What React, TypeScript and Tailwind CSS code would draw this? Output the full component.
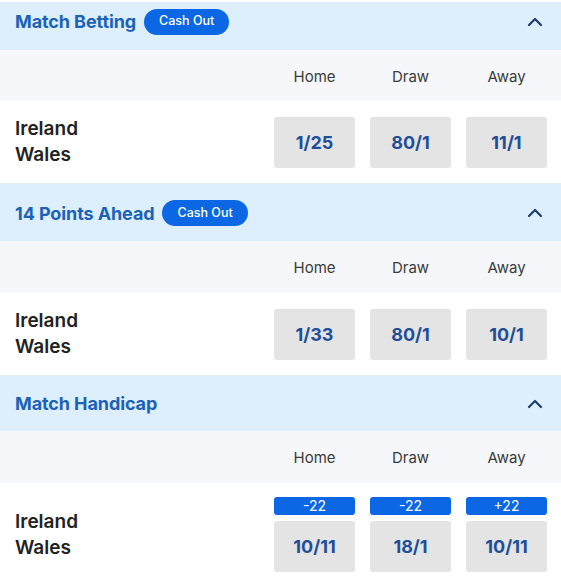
import { ChevronUp } from 'lucide-react'

type Market = {
  title: string
  cashOut: boolean
  odds: string[]
  lines?: string[]
  headerClass: string
  labelsClass: string
}

const markets: Market[] = [
  {
    title: 'Match Betting',
    cashOut: true,
    odds: ['1/25', '80/1', '11/1'],
    headerClass: 'h-[48px] pb-[9px]',
    labelsClass: 'h-[51px]',
  },
  {
    title: '14 Points Ahead',
    cashOut: true,
    odds: ['1/33', '80/1', '10/1'],
    headerClass: 'h-[57px] pt-[1px]',
    labelsClass: 'h-[52px]',
  },
  {
    title: 'Match Handicap',
    cashOut: false,
    odds: ['10/11', '18/1', '10/11'],
    lines: ['-22', '-22', '+22'],
    headerClass: 'h-[55px]',
    labelsClass: 'h-[52px]',
  },
]

function MarketBlock({ market }: { market: Market }) {
  return (
    <div className="border-b border-[#e3e9ef]">
      {/* Header */}
      <div className={`flex items-center justify-between bg-[#ddeefc] pl-[15px] pr-[14px] ${market.headerClass}`}>
        <div className="flex items-center gap-[8px]">
          <h2 className="text-[18px] font-bold text-[#1b62b8] tracking-[-0.1px]">{market.title}</h2>
          {market.cashOut && (
            <span className="flex h-[26px] items-center rounded-full bg-[#0b67e4] px-[15px] text-[12.5px] font-medium text-white">
              Cash Out
            </span>
          )}
        </div>
        <ChevronUp className="h-[24px] w-[24px] text-[#1d3e6c]" strokeWidth={2.2} />
      </div>

      {/* Column labels */}
      <div className={`flex items-center justify-end gap-[15px] bg-[#f5f7fa] pr-[14px] pt-[3px] ${market.labelsClass}`}>
        {['Home', 'Draw', 'Away'].map((label) => (
          <div key={label} className="w-[81px] text-center text-[15px] text-[#3b3b3b]">
            {label}
          </div>
        ))}
      </div>

      {/* Selection row */}
      <div
        className={
          market.lines
            ? 'flex items-center justify-between bg-white pl-[15px] pr-[14px] pt-[14px] pb-[12px]'
            : 'flex h-[82px] items-center justify-between bg-white pl-[15px] pr-[14px]'
        }
      >
        <div className="text-[19px] font-semibold leading-[26px] text-[#222]">
          <div>Ireland</div>
          <div>Wales</div>
        </div>
        <div className="flex gap-[15px]">
          {market.odds.map((odd, i) => (
            <div key={i} className="flex w-[81px] flex-col gap-[6px]">
              {market.lines && (
                <div className="flex h-[18px] items-center justify-center rounded-[3px] bg-[#0b67e4] text-[14px] leading-none text-white">
                  {market.lines[i]}
                </div>
              )}
              <button className="flex h-[51px] items-center justify-center rounded-[3px] bg-[#e4e4e4] text-[18px] font-bold text-[#1f4f98]">
                {odd}
              </button>
            </div>
          ))}
        </div>
      </div>
    </div>
  )
}

export default function App() {
  return (
    <div className="h-[579px] w-[561px] overflow-hidden bg-white pt-[2px] font-['Inter',sans-serif]">
      {markets.map((m) => (
        <MarketBlock key={m.title} market={m} />
      ))}
    </div>
  )
}
